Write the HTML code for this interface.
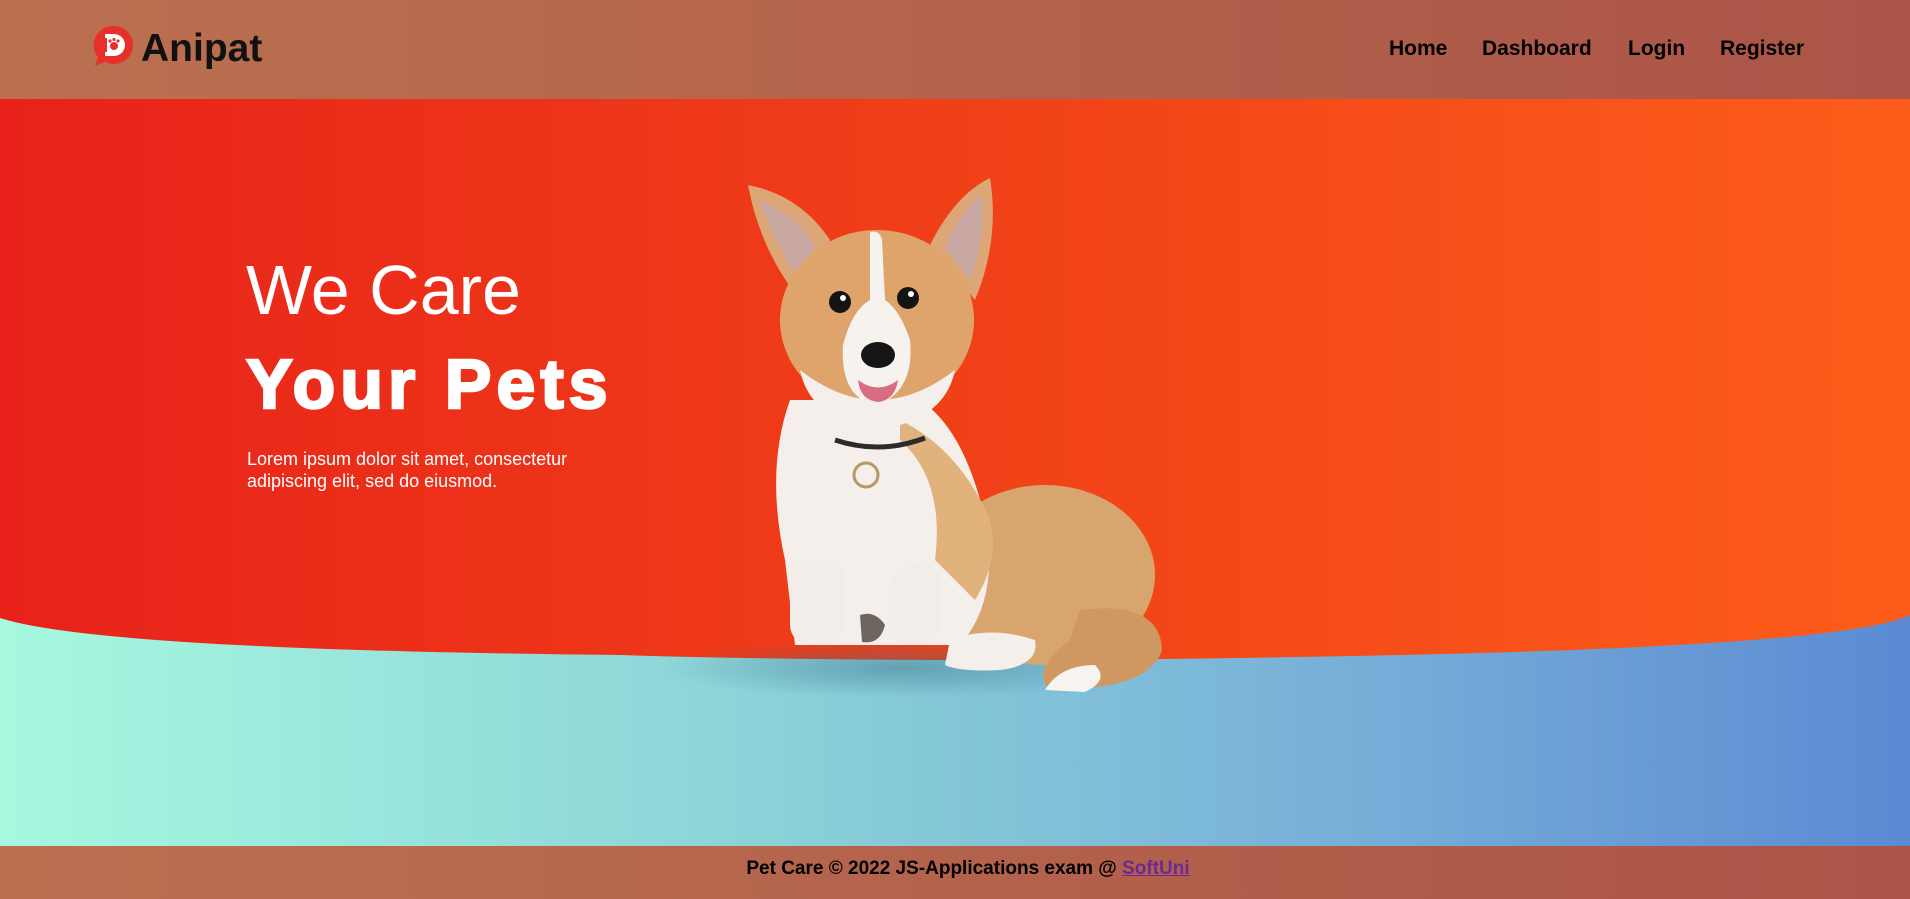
<!DOCTYPE html>
<html><head><meta charset="utf-8"><style>
*{margin:0;padding:0;box-sizing:border-box}
html,body{width:1910px;height:899px;overflow:hidden;font-family:"Liberation Sans",Arial,sans-serif}
.hdr{position:absolute;left:0;top:0;width:1910px;height:99px;background:linear-gradient(90deg,#bb7150,#ab5448)}
.logo{position:absolute;left:92px;top:24px}
.logo .t{position:absolute;left:49px;top:3px;font-size:39px;font-weight:bold;color:#111;letter-spacing:0px}
nav a{position:absolute;top:37px;font-size:21px;font-weight:bold;color:#000;text-decoration:none}
.main{position:absolute;left:0;top:99px;width:1910px;height:747px;background:linear-gradient(90deg,#a6f9df,#8ad2d8 40%,#78b0d8 70%,#5b8ad3)}
.ftr{position:absolute;left:0;top:846px;width:1910px;height:53px;background:linear-gradient(90deg,#bb7150,#ab5448);text-align:center;font-size:19px;font-weight:bold;color:#000;padding-top:12px;padding-left:26px}
.ftr a{color:#6b2a92;text-decoration:underline}
.h1{position:absolute;left:246px;top:250px;font-size:70px;color:#fff;line-height:80px}
.h2{position:absolute;left:246px;top:344px;font-size:70px;font-weight:bold;color:#fff;letter-spacing:5px;-webkit-text-stroke:2.5px #fff;line-height:80px}
.p{position:absolute;left:247px;top:448px;font-size:18px;color:#fff;line-height:22px}
</style></head><body>
<div class="hdr">
 <div class="logo">
  <svg width="44" height="44" viewBox="0 0 44 44"><path d="M22 2a19 19 0 1 1-9 35.7L3 42l3-9A19 19 0 0 1 22 2z" fill="#e8302a"/><path d="M13 10h9a11 11 0 0 1 0 22h-9v-4h2V14h-2z" fill="#fff"/><circle cx="22" cy="22" r="4" fill="#e8302a"/><circle cx="18" cy="17" r="1.6" fill="#e8302a"/><circle cx="22" cy="15.5" r="1.6" fill="#e8302a"/><circle cx="26" cy="17" r="1.6" fill="#e8302a"/></svg>
  <span class="t">Anipat</span>
 </div>
 <nav><a style="left:1389px">Home</a><a style="left:1482px">Dashboard</a><a style="left:1628px">Login</a><a style="left:1720px">Register</a></nav>
</div>
<div class="main"></div>
<svg style="position:absolute;left:0;top:0" width="1910" height="899" viewBox="0 0 1910 899">
 <defs>
  <linearGradient id="r" x1="0" x2="1"><stop offset="0" stop-color="#e8221a"/><stop offset="0.5" stop-color="#f04018"/><stop offset="1" stop-color="#fd5d1a"/></linearGradient>
  <radialGradient id="sh"><stop offset="0" stop-color="#3a6f86" stop-opacity=".45"/><stop offset="1" stop-color="#3a6f86" stop-opacity="0"/></radialGradient>
 </defs>
 <path d="M0 99H1910V615Q1850 645 1400 655Q950 665 620 655Q100 650 0 618Z" fill="url(#r)"/>
 <ellipse cx="900" cy="668" rx="240" ry="30" fill="url(#sh)"/>
 <g>
  <ellipse cx="1045" cy="575" rx="110" ry="90" fill="#d9a56e"/>
  <path d="M1080 610Q1160 600 1162 650Q1150 690 1050 690Q1030 670 1070 640Z" fill="#cf9860"/>
  <path d="M1045 690Q1060 665 1095 665Q1110 680 1085 692Z" fill="#f7f3ef"/>
  <path d="M790 400Q765 470 785 560L795 645H960Q1000 600 985 520Q965 430 920 400Z" fill="#f4efea"/>
  <path d="M900 420Q960 450 990 520Q1000 560 975 600L935 560Q945 480 900 440Z" fill="#e2b27c"/>
  <path d="M950 640Q990 625 1035 640Q1040 665 1000 670Q960 672 945 665Z" fill="#f4efea"/>
  <rect x="790" y="560" width="55" height="85" rx="20" fill="#f2ede8"/>
  <rect x="890" y="565" width="50" height="80" rx="20" fill="#f2ede8"/>
  <path d="M860 615Q875 610 885 625Q880 645 862 642Z" fill="#6d6560"/>
  <path d="M748 185Q800 195 830 240L800 300Q760 250 748 185Z" fill="#dca676"/>
  <path d="M760 200Q795 215 815 245L800 280Q775 245 760 200Z" fill="#c9a8a3"/>
  <path d="M990 178Q1000 240 975 300L930 245Q955 195 990 178Z" fill="#dca676"/>
  <path d="M982 195Q985 240 970 280L945 248Q960 210 982 195Z" fill="#c9a8a3"/>
  <ellipse cx="877" cy="320" rx="97" ry="90" fill="#dfa46c"/>
  <path d="M870 232Q880 230 882 240L885 300Q900 310 910 340Q915 390 878 405Q840 400 843 345Q852 310 870 300Z" fill="#f6f2ee"/>
  <path d="M800 370Q877 430 955 370Q945 420 877 430Q810 420 800 370Z" fill="#f4efea"/>
  <circle cx="840" cy="302" r="11" fill="#141414"/><circle cx="908" cy="298" r="11" fill="#141414"/>
  <circle cx="843" cy="298" r="3" fill="#fff"/><circle cx="911" cy="294" r="3" fill="#fff"/>
  <ellipse cx="878" cy="355" rx="17" ry="13" fill="#151515"/>
  <path d="M858 380Q878 395 898 380Q895 400 878 402Q860 400 858 380Z" fill="#d96b82"/>
  <path d="M835 440Q880 455 925 438" stroke="#2b2b2b" stroke-width="5" fill="none"/>
  <circle cx="866" cy="475" r="12" fill="none" stroke="#b89862" stroke-width="3"/>
 </g>
</svg>
<div class="h1">We Care</div>
<div class="h2">Your Pets</div>
<div class="p">Lorem ipsum dolor sit amet, consectetur<br>adipiscing elit, sed do eiusmod.</div>
<div class="ftr">Pet Care © 2022 JS-Applications exam @ <a>SoftUni</a></div>
</body></html>
